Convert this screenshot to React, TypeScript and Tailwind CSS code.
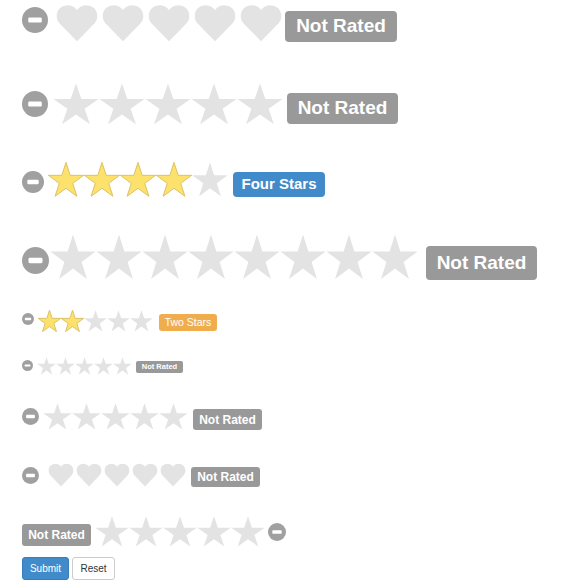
import React from "react";

// star + heart outlines used by every rating row
const STAR = "50,0 61.8,36.3 100,36.3 69.1,58.8 80.9,95.1 50,72.7 19.1,95.1 30.9,58.8 0,36.3 38.2,36.3";
const HEART = "M50 88 L9 47 C-3 35 -1 12 18 5 C33 -1 44 6 50 14 C56 6 67 -1 82 5 C101 12 103 35 91 47 Z";

type Shape = "star" | "heart";

const Symbol = ({ shape, w, h, filled }: { shape: Shape; w: number; h: number; filled?: boolean }) =>
  shape === "heart" ? (
    <svg width={w} height={h} viewBox="-5 0 110 90" preserveAspectRatio="none" className="block shrink-0">
      <path d={HEART} fill="#e3e3e3" />
    </svg>
  ) : (
    <svg width={w} height={h} viewBox="-1 -1 102 98" preserveAspectRatio="none" className="block shrink-0">
      <polygon
        points={STAR}
        fill={filled ? "#fde16d" : "#e3e3e3"}
        stroke={filled ? "#dcc266" : "none"}
        strokeWidth={1}
        strokeLinejoin="round"
        vectorEffect="non-scaling-stroke"
      />
    </svg>
  );

const Clear = ({ className }: { className: string }) => (
  <svg viewBox="0 0 100 100" className={"block shrink-0 " + className}>
    <circle cx="50" cy="50" r="50" fill="#a0a0a0" />
    <rect x="24" y="40" width="52" height="20" rx="5" fill="#fff" />
  </svg>
);

const Symbols = ({
  shape,
  count,
  filled = 0,
  w,
  h,
  className,
}: {
  shape: Shape;
  count: number;
  filled?: number;
  w: number;
  h: number;
  className: string;
}) => (
  <div className={"flex shrink-0 " + className}>
    {Array.from({ length: count }).map((_, i) => (
      <Symbol key={i} shape={shape} w={w} h={h} filled={i < filled} />
    ))}
  </div>
);

const App = () => (
  <div className="w-[565px] h-[587px] bg-white pl-[22px] font-['Liberation_Sans',Arial,sans-serif]">
    {/* hearts, xl */}
    <div className="flex items-start pt-[4px]">
      <Clear className="w-[26px] h-[26px] mt-[3px]" />
      <Symbols shape="heart" count={5} w={46} h={38} className="ml-[6px]" />
      <span className="ml-[1px] mt-[7px] flex h-[31px] w-[112px] shrink-0 items-center justify-center rounded-[4px] bg-[#999] text-[19px] font-bold text-white">
        Not Rated
      </span>
    </div>

    {/* stars, xl */}
    <div className="flex items-start mt-[41px]">
      <Clear className="w-[26px] h-[26px] mt-[8px]" />
      <Symbols shape="star" count={5} w={46} h={42} className="ml-[5px]" />
      <span className="ml-[4px] mt-[10px] flex h-[31px] w-[111px] shrink-0 items-center justify-center rounded-[4px] bg-[#999] text-[19px] font-bold text-white">
        Not Rated
      </span>
    </div>

    {/* four stars, lg */}
    <div className="flex items-start mt-[37px]">
      <Clear className="w-[22px] h-[22px] mt-[9px]" />
      <Symbols shape="star" count={5} filled={4} w={36} h={35} className="ml-[4px]" />
      <span className="ml-[5px] mt-[10px] flex h-[25px] w-[92px] shrink-0 items-center justify-center rounded-[4px] bg-[#428bca] text-[15px] font-bold text-white">
        Four Stars
      </span>
    </div>

    {/* eight stars */}
    <div className="flex items-start mt-[37px]">
      <Clear className="w-[27px] h-[27px] mt-[13px]" />
      <Symbols shape="star" count={8} w={46} h={46} className="ml-[1px]" />
      <span className="ml-[8px] mt-[12px] flex h-[34px] w-[111px] shrink-0 items-center justify-center rounded-[4px] bg-[#999] text-[19px] font-bold text-white">
        Not Rated
      </span>
    </div>

    {/* two stars, sm */}
    <div className="flex items-start mt-[30px]">
      <Clear className="w-[12px] h-[12px] mt-[3px]" />
      <Symbols shape="star" count={5} filled={2} w={23} h={22} className="ml-[4px]" />
      <span className="ml-[6px] mt-[4px] flex h-[17px] w-[58px] shrink-0 items-center justify-center rounded-[3px] bg-[#f0ad4e] text-[10.5px] text-white">
        Two Stars
      </span>
    </div>

    {/* xs */}
    <div className="flex items-start mt-[25px]">
      <Clear className="w-[11px] h-[11px] mt-[3px]" />
      <Symbols shape="star" count={5} w={19} h={18} className="ml-[4px]" />
      <span className="ml-[4px] mt-[4px] flex h-[12px] w-[47px] shrink-0 items-center justify-center rounded-[2px] bg-[#999] text-[7.5px] font-bold text-white">
        Not Rated
      </span>
    </div>

    {/* md stars */}
    <div className="flex items-start mt-[28px]">
      <Clear className="w-[17px] h-[17px] mt-[5px]" />
      <Symbols shape="star" count={5} w={29} h={27} className="ml-[4px]" />
      <span className="ml-[5px] mt-[6px] flex h-[21px] w-[69px] shrink-0 items-center justify-center rounded-[3px] bg-[#999] text-[12px] font-bold text-white">
        Not Rated
      </span>
    </div>

    {/* md hearts */}
    <div className="flex items-start mt-[33px]">
      <Clear className="w-[17px] h-[17px] mt-[4px]" />
      <Symbols shape="heart" count={5} w={28} h={24} className="ml-[8px]" />
      <span className="ml-[4px] mt-[4px] flex h-[20px] w-[69px] shrink-0 items-center justify-center rounded-[3px] bg-[#999] text-[12px] font-bold text-white">
        Not Rated
      </span>
    </div>

    {/* reversed: caption first, clear last */}
    <div className="flex items-start mt-[29px]">
      <span className="mt-[8px] flex h-[22px] w-[69px] shrink-0 items-center justify-center rounded-[3px] bg-[#999] text-[12px] font-bold text-white">
        Not Rated
      </span>
      <Symbols shape="star" count={5} w={34} h={31} className="ml-[4px]" />
      <Clear className="w-[18px] h-[18px] mt-[7px] ml-[3px]" />
    </div>

    <div className="flex mt-[10px] gap-[3px]">
      <button className="h-[23px] w-[47px] rounded-[3px] border border-[#357ebd] bg-[#428bca] text-[10px] text-white">
        Submit
      </button>
      <button className="h-[23px] w-[43px] rounded-[3px] border border-[#ccc] bg-white text-[10px] text-[#333]">
        Reset
      </button>
    </div>
  </div>
);

export default App;
